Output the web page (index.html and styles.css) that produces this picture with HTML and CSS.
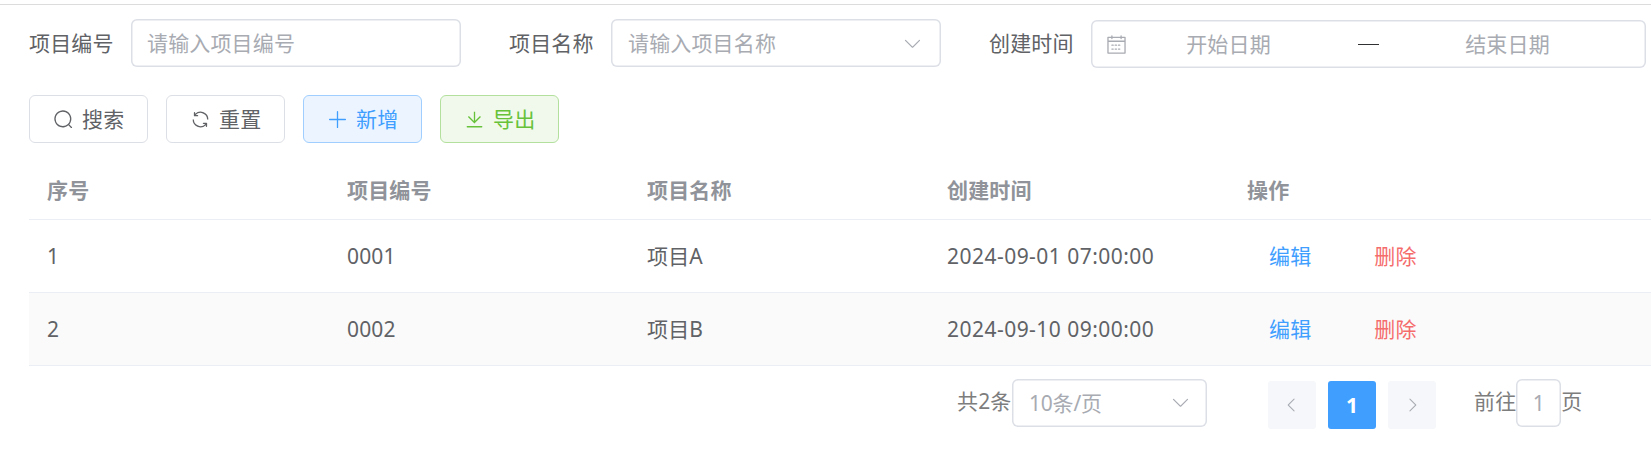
FILE: index.html
```html
<!DOCTYPE html>
<html lang="zh-CN">
<head>
<meta charset="utf-8">
<title>项目管理</title>
<link rel="stylesheet" href="styles.css">
</head>
<body>
<svg class="sprite" aria-hidden="true">
  <symbol id="search" viewBox="0 0 1024 1024"><path d="m795.904 750.72 124.992 124.928a32 32 0 0 1-45.248 45.248L750.656 795.904a416 416 0 1 1 45.248-45.248zM480 832a352 352 0 1 0 0-704 352 352 0 0 0 0 704z"/></symbol>
  <symbol id="refresh" viewBox="0 0 1024 1024"><path d="M771.776 794.88A384 384 0 0 1 128 512h64a320 320 0 0 0 555.712 216.448H654.72a32 32 0 1 1 0-64h149.056a32 32 0 0 1 32 32v148.928a32 32 0 1 1-64 0v-50.56zM276.288 295.616h92.992a32 32 0 0 1 0 64H220.16a32 32 0 0 1-32-32V178.56a32 32 0 0 1 64 0v50.56A384 384 0 0 1 896.128 512h-64a320 320 0 0 0-555.776-216.384z"/></symbol>
  <symbol id="plus" viewBox="0 0 1024 1024"><path d="M480 480V128a32 32 0 0 1 64 0v352h352a32 32 0 1 1 0 64H544v352a32 32 0 1 1-64 0V544H128a32 32 0 0 1 0-64h352z"/></symbol>
  <symbol id="download" viewBox="0 0 1024 1024"><path d="M160 832h704a32 32 0 1 1 0 64H160a32 32 0 1 1 0-64zm384-253.696 236.288-236.352 45.248 45.248L508.8 704 192 387.2l45.248-45.248L480 584.704V128h64v450.304z"/></symbol>
  <symbol id="arrow-down" viewBox="0 0 1024 1024"><path d="M831.872 340.864 512 652.672 192.128 340.864a30.592 30.592 0 0 0-42.752 0 29.12 29.12 0 0 0 0 41.6L489.664 714.24a32 32 0 0 0 44.672 0l340.288-331.712a29.12 29.12 0 0 0 0-41.728 30.592 30.592 0 0 0-42.752 0z"/></symbol>
  <symbol id="arrow-left" viewBox="0 0 1024 1024"><path d="M609.408 149.376 277.76 489.6a32 32 0 0 0 0 44.672l331.648 340.352a29.12 29.12 0 0 0 41.728 0 30.592 30.592 0 0 0 0-42.752L339.264 511.936l311.872-319.872a30.592 30.592 0 0 0 0-42.688 29.12 29.12 0 0 0-41.728 0z"/></symbol>
  <symbol id="calendar" viewBox="0 0 1024 1024"><path d="M128 384v512h768V192H768v32a32 32 0 1 1-64 0v-32H320v32a32 32 0 0 1-64 0v-32H128v128h768v64H128zm192-256h384V96a32 32 0 1 1 64 0v32h160a32 32 0 0 1 32 32v768a32 32 0 0 1-32 32H96a32 32 0 0 1-32-32V160a32 32 0 0 1 32-32h160V96a32 32 0 0 1 64 0v32zm-32 384h64a32 32 0 0 1 0 64h-64a32 32 0 0 1 0-64zm0 192h64a32 32 0 1 1 0 64h-64a32 32 0 1 1 0-64zm160-192h64a32 32 0 0 1 0 64h-64a32 32 0 0 1 0-64zm0 192h64a32 32 0 1 1 0 64h-64a32 32 0 1 1 0-64zm160-192h64a32 32 0 1 1 0 64h-64a32 32 0 1 1 0-64zm0 192h64a32 32 0 1 1 0 64h-64a32 32 0 1 1 0-64z"/></symbol>
</svg>
<main class="page">
  <form class="filters">
    <div class="field"><span class="label">项目编号</span><div class="box input"><span>请输入项目编号</span></div></div>
    <div class="field"><span class="label">项目名称</span><div class="box select"><span>请输入项目名称</span><svg class="icon"><use href="#arrow-down"/></svg></div></div>
    <div class="field"><span class="label">创建时间</span><div class="box range"><svg class="icon"><use href="#calendar"/></svg><span class="date">开始日期</span><span class="sep"><i class="dash"></i></span><span class="date">结束日期</span></div></div>
  </form>
  <div class="actions">
    <button class="btn"><svg class="icon"><use href="#search"/></svg><span>搜索</span></button>
    <button class="btn"><svg class="icon"><use href="#refresh"/></svg><span>重置</span></button>
    <button class="btn primary"><svg class="icon"><use href="#plus"/></svg><span>新增</span></button>
    <button class="btn success"><svg class="icon"><use href="#download"/></svg><span>导出</span></button>
  </div>
  <div class="table">
    <div class="row head"><div>序号</div><div>项目编号</div><div>项目名称</div><div>创建时间</div><div>操作</div></div>
    <div class="row"><div>1</div><div>0001</div><div>项目A</div><div class="time">2024-09-01 07:00:00</div><div class="ops"><a class="edit">编辑</a><a class="del">删除</a></div></div>
    <div class="row striped"><div>2</div><div>0002</div><div>项目B</div><div class="time">2024-09-10 09:00:00</div><div class="ops"><a class="edit">编辑</a><a class="del">删除</a></div></div>
  </div>
  <div class="pagination">
    <span class="note total">共2条</span>
    <div class="box select size"><span>10条/页</span><svg class="icon"><use href="#arrow-down"/></svg></div>
    <div class="pager">
      <span class="pg"><svg class="arrow"><use href="#arrow-left"/></svg></span>
      <span class="pg active">1</span>
      <span class="pg"><svg class="arrow next"><use href="#arrow-left"/></svg></span>
    </div>
    <span class="note">前往</span>
    <div class="box jump"><span>1</span></div>
    <span class="note">页</span>
  </div>
</main>
</body>
</html>
```
FILE: styles.css
```css
* { box-sizing: border-box; }
body {
  margin: 0;
  background: #fff;
  color: #606266;
  font: 21px/30px "Noto Sans", "Noto Sans CJK SC", sans-serif;
  letter-spacing: .15px;
  overflow: hidden;
}
.sprite { display: none; }
.icon { width: 21px; height: 21px; flex: none; fill: currentColor; }
.page { margin-top: 4px; border-top: 1px solid #dcdcdc; padding-left: 29px; height: 450px; overflow: hidden; }
.filters { display: flex; gap: 48px; padding-top: 14px; height: 90px; align-items: flex-start; }
.field { display: flex; gap: 18px; }
.label { width: 84px; line-height: 48px; white-space: nowrap; }
.box {
  display: flex;
  align-items: center;
  height: 48px;
  border-radius: 6px;
  box-shadow: inset 0 0 0 1.5px #dcdfe6;
  color: #a8abb2;
  white-space: nowrap;
}
.input { width: 330px; padding: 0 16px; }
.select { width: 330px; padding: 0 18px 0 17px; justify-content: space-between; }
.range { width: 555px; padding: 0 15px; margin-top: 1px; }
.date { width: 203px; text-align: center; }
.sep { width: 76px; display: flex; justify-content: center; }
.dash { width: 21px; height: 1px; margin-left: 1px; background: #303133; }
.actions { display: flex; gap: 18px; height: 51px; }
.btn {
  display: flex;
  align-items: center;
  gap: 8px;
  width: 119px;
  height: 48px;
  padding: 0 0 0 23px;
  border: 1px solid #dcdfe6;
  border-radius: 6px;
  background: #fff;
  color: #606266;
  font: inherit;
  letter-spacing: inherit;
}
.primary { background: #ecf5ff; border-color: #a0cfff; color: #409eff; }
.success { background: #f0f9eb; border-color: #b3e19d; color: #67c23a; }
.row {
  display: grid;
  grid-template-columns: repeat(5, 300px);
  width: 1622px;
  height: 73px;
  align-items: center;
  border-bottom: 1px solid #ebeef5;
}
.row > div { padding-left: 18px; }
.row.head { height: 74px; padding-top: 14px; color: #909399; font-weight: 700; }
.striped { background: #fafafa; }
.row > .time { letter-spacing: .47px; white-space: nowrap; }
.row > .ops { display: flex; gap: 63px; padding-left: 40px; }
.edit { color: #409eff; }
.del { color: #f56c6c; }
.pagination { display: flex; align-items: flex-start; padding: 13px 0 0 928px; }
.note { color: #7d7d7d; line-height: 44px; white-space: nowrap; }
.total { width: 55px; }
.size { width: 195px; padding-right: 16px; letter-spacing: -.2px; line-height: 28px; padding-bottom: 1px; }
.pager { display: flex; gap: 12px; margin: 2px 38px 0 61px; }
.pg { display: flex; align-items: center; justify-content: center; width: 48px; height: 48px; border-radius: 3px; background: #f5f7fa; color: #a8abb2; }
.pg.active { background: #409eff; color: #fff; font-weight: 700; }
.arrow { width: 18px; height: 18px; fill: currentColor; }
.next { transform: scaleX(-1); }
.jump { width: 45px; justify-content: center; }
```
